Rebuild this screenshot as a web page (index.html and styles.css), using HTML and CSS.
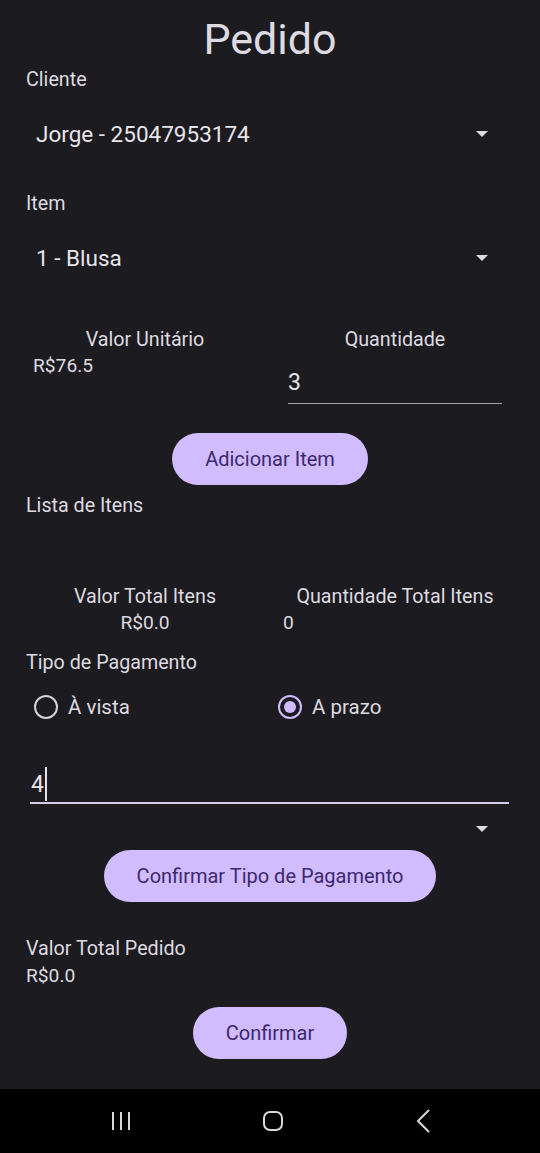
FILE: index.html
```html
<!DOCTYPE html>
<html lang="pt">
<head>
<meta charset="utf-8">
<title>Pedido</title>
<link rel="stylesheet" href="styles.css">
</head>
<body>
<div class="screen">
  <main class="content">
    <h1 class="title">Pedido</h1>

    <div class="label lbl-cliente">Cliente</div>
    <div class="select sel-cliente">
      <span class="select-text">Jorge - 25047953174</span>
      <span class="arrow"></span>
    </div>

    <div class="label lbl-item">Item</div>
    <div class="select sel-item">
      <span class="select-text">1 - Blusa</span>
      <span class="arrow"></span>
    </div>

    <div class="pair pair-unit">
      <div class="col">
        <div class="col-head">Valor Unitário</div>
        <div class="value value-left">R$76.5</div>
      </div>
      <div class="col col-right">
        <div class="col-head">Quantidade</div>
        <div class="field field-qty">3</div>
      </div>
    </div>

    <div class="btn-row btn-row-add">
      <button class="btn">Adicionar Item</button>
    </div>

    <div class="label lbl-lista">Lista de Itens</div>

    <div class="pair pair-total">
      <div class="col">
        <div class="col-head">Valor Total Itens</div>
        <div class="value value-center">R$0.0</div>
      </div>
      <div class="col col-right2">
        <div class="col-head">Quantidade Total Itens</div>
        <div class="value value-left0">0</div>
      </div>
    </div>

    <div class="label lbl-tipo">Tipo de Pagamento</div>
    <div class="radios">
      <label class="radio-item"><span class="radio"></span><span class="radio-text">À vista</span></label>
      <label class="radio-item"><span class="radio radio-on"></span><span class="radio-text">A prazo</span></label>
    </div>

    <div class="field field-parcelas"><span class="field-val">4</span><span class="cursor"></span></div>

    <div class="select sel-empty"><span class="arrow"></span></div>

    <div class="btn-row btn-row-tipo">
      <button class="btn">Confirmar Tipo de Pagamento</button>
    </div>

    <div class="label lbl-vtp">Valor Total Pedido</div>
    <div class="value value-vtp">R$0.0</div>

    <div class="btn-row btn-row-confirm">
      <button class="btn">Confirmar</button>
    </div>
  </main>

  <nav class="navbar">
    <svg class="nav-icon" width="24" height="24" viewBox="0 0 24 24" aria-hidden="true">
      <path d="M4 3v18M12 3v18M20 3v18" stroke="#d9d9d9" stroke-width="2" fill="none"/>
    </svg>
    <svg class="nav-icon" width="24" height="24" viewBox="0 0 24 24" aria-hidden="true">
      <rect x="3" y="3" width="18" height="18" rx="6" stroke="#d9d9d9" stroke-width="2" fill="none"/>
    </svg>
    <svg class="nav-icon" width="24" height="24" viewBox="0 0 24 24" aria-hidden="true">
      <path d="M16.5 1.5L6 12l10.5 10.5" stroke="#d9d9d9" stroke-width="2" fill="none" stroke-linecap="round" stroke-linejoin="round"/>
    </svg>
  </nav>
</div>
</body>
</html>
```

FILE: styles.css
```css
* { box-sizing: border-box; }

html, body {
  margin: 0;
  padding: 0;
  background: #1c1b1f;
}

body {
  font-family: Roboto, "Noto Sans", "Liberation Sans", sans-serif;
  color: #dedae1;
}

.screen {
  width: 540px;
  height: 1153px;
  display: flex;
  flex-direction: column;
}

.content {
  height: 1089px;
  padding: 0 26px;
  display: flex;
  flex-direction: column;
}

.title {
  margin: 14px 0 0;
  height: 50px;
  line-height: 50px;
  font-size: 43px;
  font-weight: 400;
  text-align: center;
  color: #dedae1;
}

.label {
  height: 24px;
  line-height: 24px;
  font-size: 19.7px;
  color: #dedae1;
}

.lbl-cliente { margin-top: 4px; }
.lbl-item { margin-top: 30px; }
.lbl-lista { margin-top: 9px; }
.lbl-tipo { margin-top: 17px; }
.lbl-vtp { margin-top: 35px; }

.select {
  height: 56px;
  display: flex;
  align-items: center;
  justify-content: space-between;
  padding: 0 26px 0 10px;
}

.sel-cliente { margin-top: 14px; }
.sel-item { margin-top: 14px; }

.select-text {
  font-size: 22.5px;
  color: #e8e4eb;
}

.arrow {
  width: 0;
  height: 0;
  border-left: 6px solid transparent;
  border-right: 6px solid transparent;
  border-top: 6px solid #dedae1;
}

.sel-empty {
  margin-top: 14px;
  height: 22px;
  justify-content: flex-end;
}

.pair {
  display: grid;
}

.pair-unit {
  margin-top: 42px;
  column-gap: 24px;
  grid-template-columns: 238px 214px;
}

.pair-total {
  margin-top: 67px;
  column-gap: 19px;
  grid-template-columns: 238px 224px;
}

.col {
  display: flex;
  flex-direction: column;
}

.col-head {
  height: 24px;
  line-height: 24px;
  font-size: 19.7px;
  text-align: center;
  white-space: nowrap;
}

.value {
  height: 22px;
  line-height: 22px;
  font-size: 19.2px;
  margin-top: 3px;
  color: #dedae1;
}

.value-left { padding-left: 7px; }
.value-center { text-align: center; }
.value-left0 { padding-left: 0; }

.value-vtp { margin-top: 4px; }

.field {
  font-size: 23px;
  color: #e8e4eb;
}

.field-qty {
  margin-top: 11px;
  height: 41px;
  line-height: 40px;
  border-bottom: 1px solid #a9a5ad;
}

.field-parcelas {
  margin: 45px 5px 0 4px;
  height: 38px;
  padding-left: 1px;
  display: flex;
  align-items: center;
  border-bottom: 2px solid #d8cde6;
}

.cursor {
  width: 2px;
  height: 34px;
  margin-left: 1px;
  background: #e8e0f0;
}

.btn-row {
  display: flex;
  justify-content: center;
}

.btn-row-add { margin-top: 29px; }
.btn-row-tipo { margin-top: 10px; }
.btn-row-confirm { margin-top: 20px; }

.btn {
  height: 52px;
  padding: 0 33px;
  border: none;
  border-radius: 26px;
  background: #d0bcff;
  color: #3d2870;
  font-family: Roboto, "Noto Sans", "Liberation Sans", sans-serif;
  font-size: 20px;
  font-weight: 400;
}

.radios {
  margin-top: 18px;
  height: 28px;
  display: grid;
  grid-template-columns: 244px 1fr;
  padding-left: 8px;
}

.radio-item {
  display: flex;
  align-items: center;
  gap: 10px;
}

.radio {
  width: 24px;
  height: 24px;
  border-radius: 50%;
  border: 2px solid #d6d2da;
  display: flex;
  align-items: center;
  justify-content: center;
}

.radio-on {
  border-color: #d0bcff;
}

.radio-on::after {
  content: "";
  width: 12px;
  height: 12px;
  border-radius: 50%;
  background: #d0bcff;
}

.radio-text {
  font-size: 20.5px;
  color: #dedae1;
}

.navbar {
  height: 64px;
  background: #000;
  display: flex;
  align-items: center;
  justify-content: space-between;
  padding: 0 104px 0 109px;
}

.nav-icon {
  display: block;
}
```
